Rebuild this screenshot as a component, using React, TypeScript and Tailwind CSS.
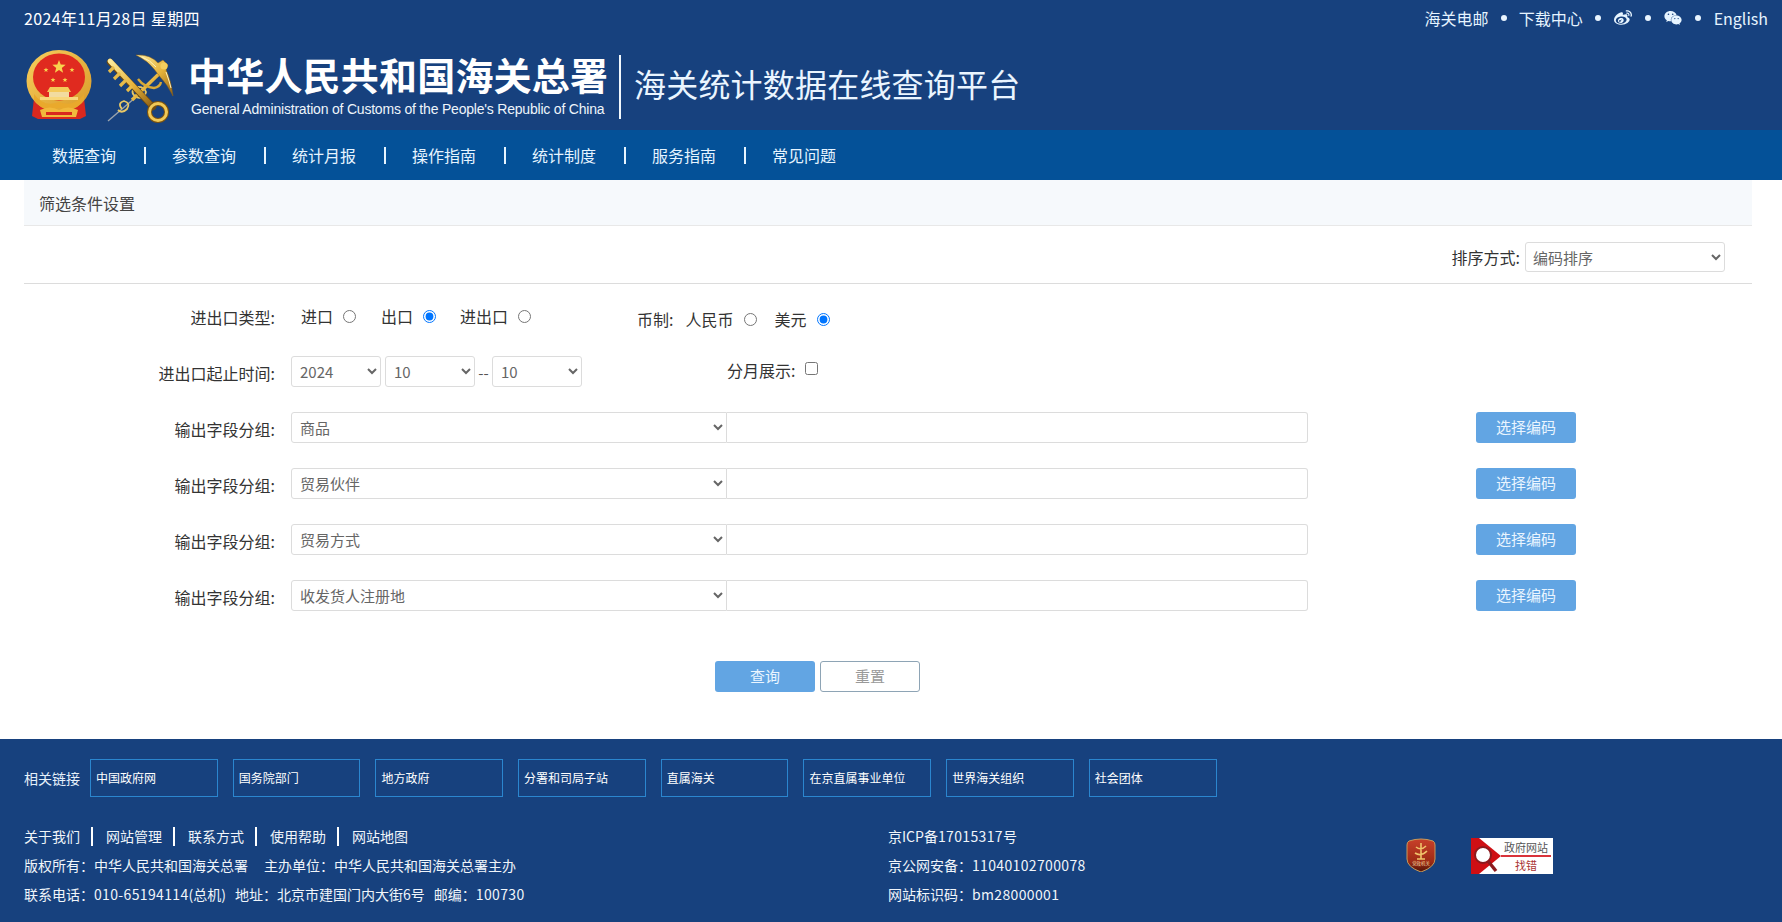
import { FaWeibo, FaWeixin } from "react-icons/fa";

const FC = "\uFF1A";

const Dot = ({ cls }: { cls: string }) => <span className={`w-[6px] h-[6px] rounded-full bg-[#eaf5ff] shrink-0 ${cls}`} />;

function Emblem() {
  const stars: [number, number, number][] = [
    [33, 17, 7],
    [20, 20, 2.6],
    [46, 20, 2.6],
    [27, 30, 2.6],
    [39, 30, 2.6],
  ];
  const star = (cx: number, cy: number, r: number) => {
    const p: string[] = [];
    for (let i = 0; i < 10; i++) {
      const a = (Math.PI / 5) * i - Math.PI / 2;
      const rr = i % 2 ? r * 0.42 : r;
      p.push(`${(cx + rr * Math.cos(a)).toFixed(2)},${(cy + rr * Math.sin(a)).toFixed(2)}`);
    }
    return p.join(" ");
  };
  return (
    <svg width="66" height="69" viewBox="0 0 66 69" className="shrink-0">
      <defs>
        <linearGradient id="eg" x1="0" y1="0" x2="1" y2="1">
          <stop offset="0" stopColor="#f7cf5e" />
          <stop offset="1" stopColor="#d99a28" />
        </linearGradient>
      </defs>
      <path d="M8 48 L6 66 L12 69 H54 L60 66 L58 48 Z" fill="#d9281e" />
      <ellipse cx="33" cy="31" rx="32.5" ry="31" fill="url(#eg)" />
      <ellipse cx="33" cy="27" rx="26" ry="23.5" fill="#e02a1f" />
      {stars.map(([x, y, r], i) => (
        <polygon key={i} points={star(x, y, r)} fill="#f8d34e" />
      ))}
      <path d="M21 42 L24 37 H42 L45 42 Z" fill="#f4c95a" />
      <rect x="23" y="42" width="20" height="5" fill="#f2dca0" />
      <rect x="14" y="47" width="38" height="3" fill="#f8d77a" />
      <path d="M8 44 Q18 58 33 52 Q48 58 58 44 L58 50 Q48 64 33 58 Q18 64 8 50 Z" fill="#e9a92c" />
      <path d="M14 60 Q24 55 33 60 Q42 55 52 60 L50 67 H16 Z" fill="#f1b93c" />
      <path d="M20 62 H46 V65 H20 Z" fill="#d9281e" />
    </svg>
  );
}

function CustomsKey() {
  return (
    <svg width="68" height="70" viewBox="0 0 68 70" className="shrink-0">
      <defs>
        <linearGradient id="kg" x1="0" y1="0" x2="1" y2="1">
          <stop offset="0" stopColor="#fdeb9c" />
          <stop offset="0.55" stopColor="#e5b23a" />
          <stop offset="1" stopColor="#8f6115" />
        </linearGradient>
      </defs>
      <path d="M2 67 L30 43" stroke="#9aa3ad" strokeWidth="1.4" fill="none" />
      <path d="M16 55 Q11 49 18 47 Q25 49 21 55 Q16 60 12 56 M30 43 Q23 38 30 33 Q38 32 40 38 Q38 46 30 43" stroke="#e8c765" strokeWidth="1.8" fill="none" />
      <path d="M26 46 L58 15" stroke="url(#kg)" strokeWidth="3.4" fill="none" />
      <path d="M32 25 Q38 33 48 34 Q54 33 55 28" stroke="#d8a936" strokeWidth="2.4" fill="none" />
      <path d="M4 8 L47 53" stroke="#6d4a10" strokeWidth="6.4" strokeLinecap="round" fill="none" />
      <path d="M4 7 L46 52" stroke="url(#kg)" strokeWidth="4.8" strokeLinecap="round" fill="none" />
      <path d="M8 13 L3 18 M14 19 L8 25 M20 26 L14 32 M26 32 L21 37" stroke="#e6bb4a" strokeWidth="3.2" fill="none" />
      <circle cx="52" cy="58" r="8.5" stroke="#7c5310" strokeWidth="5" fill="none" />
      <circle cx="52" cy="58" r="8.5" stroke="#f0c957" strokeWidth="3" fill="none" />
      <path d="M30 1 Q44 0 52 9 L57 6 L62 11 L60 16 Q65 26 67 42 Q61 30 55 24 L48 15 Q42 7 30 1 Z" fill="url(#kg)" stroke="#8f6115" strokeWidth="0.5" />
      <path d="M36 3 Q44 6 50 13 M60 18 Q63 26 65 34" stroke="#fff3c0" strokeWidth="1" fill="none" />
      <circle cx="58" cy="12" r="3.6" fill="#f3ce5e" />
    </svg>
  );
}

function Badge() {
  return (
    <svg width="30" height="34" viewBox="0 0 30 34" className="shrink-0">
      <defs>
        <linearGradient id="bg1" x1="0" y1="0" x2="0" y2="1">
          <stop offset="0" stopColor="#c8402a" />
          <stop offset="0.7" stopColor="#9c2a14" />
          <stop offset="1" stopColor="#4f1408" />
        </linearGradient>
      </defs>
      <path d="M3 3 Q15 -1 27 3 Q29 4 29 7 V21 Q29 29 15 34 Q1 29 1 21 V7 Q1 4 3 3 Z" fill="url(#bg1)" stroke="#c79a5a" strokeWidth="1" />
      <path d="M15 5 V21 M10 9 Q15 13 20 8 M9 15 Q15 19 21 13 M11 21 H19" stroke="#f0c36a" strokeWidth="1.6" fill="none" />
      <text x="15" y="27" fontSize="4.4" fill="#f4d9a0" textAnchor="middle">党政机关</text>
    </svg>
  );
}

function GovError() {
  return (
    <div className="flex w-[82px] h-[36px] bg-white shrink-0">
      <svg width="30" height="36" viewBox="0 0 30 36" className="shrink-0">
        <path d="M0 0 H8 L30 18 L8 36 H0 Z" fill="#cf0f14" />
        <circle cx="12" cy="17" r="8" fill="#fff" stroke="#8d1a1e" strokeWidth="2" />
        <path d="M17 23 L25 33" stroke="#8d1a1e" strokeWidth="3.4" />
      </svg>
      <div className="flex flex-col items-center w-[50px] pt-[2px]">
        <span className="text-[11px] leading-[15px] text-[#555] whitespace-nowrap">政府网站</span>
        <span className="w-full h-[2px] bg-[#d9333a]" />
        <span className="text-[11px] leading-[16px] text-[#a33] whitespace-nowrap">找错</span>
      </div>
    </div>
  );
}

function Radio({ label, checked, name, textClass }: { label: string; checked?: boolean; name: string; textClass: string }) {
  return (
    <label className={`flex items-center ${textClass}`}>
      <span>{label}</span>
      <input type="radio" name={name} defaultChecked={checked} className="m-0 ml-[10px] w-[13px] h-[13px]" />
    </label>
  );
}

function FieldRow({ value }: { value: string }) {
  return (
    <div className="flex h-[31px] mt-[25px]">
      <div className="w-[275px] text-right pt-[5px] text-[16px] leading-[24px] text-[#333]">输出字段分组:</div>
      <select
        defaultValue={value}
        className="ml-[16px] w-[436px] h-[31px] bg-white border border-[#dcdcdc] rounded-l-[3px] pl-[4px] text-[15px] text-[#666]"
      >
        <option>{value}</option>
      </select>
      <input type="text" className="w-[581px] h-[31px] bg-white border border-l-0 border-[#dcdcdc] rounded-r-[3px]" />
      <button className="ml-[168px] w-[100px] h-[31px] rounded-[3px] bg-[#62a5e3] text-[15px] text-[#eaf5ff]">选择编码</button>
    </div>
  );
}

function Sel({ v, cls }: { v: string; cls: string }) {
  return (
    <select defaultValue={v} className={`w-[90px] h-[31px] bg-white border border-[#dcdcdc] rounded-[3px] pl-[4px] text-[15px] text-[#666] ${cls}`}>
      <option>{v}</option>
    </select>
  );
}

export default function App() {
  const nav = ["数据查询", "参数查询", "统计月报", "操作指南", "统计制度", "服务指南", "常见问题"];
  const boxes = ["中国政府网", "国务院部门", "地方政府", "分署和司局子站", "直属海关", "在京直属事业单位", "世界海关组织", "社会团体"];
  const links = ["关于我们", "网站管理", "联系方式", "使用帮助", "网站地图"];
  return (
    <div className="w-[1782px] h-[922px] overflow-hidden bg-white font-['Noto_Sans_CJK_SC',sans-serif]">
      <header className="h-[130px] bg-[#17417e]">
        <div className="h-[36px] flex items-center justify-between pl-[24px] pr-[14px] text-[16px] text-white">
          <span className="tracking-[0.35px]">2024年11月28日 星期四</span>
          <div className="flex items-center text-[#e6f4ff]">
            <span>海关电邮</span>
            <Dot cls="ml-[12px]" />
            <span className="ml-[12px]">下载中心</span>
            <Dot cls="ml-[12px]" />
            <FaWeibo className="ml-[13px] w-[18px] h-[18px]" />
            <Dot cls="ml-[13px]" />
            <FaWeixin className="ml-[13px] w-[18px] h-[18px]" />
            <Dot cls="ml-[13px]" />
            <span className="ml-[13px]">English</span>
          </div>
        </div>
        <div className="flex items-start pl-[26px] pt-[14px]">
          <Emblem />
          <div className="ml-[14px] mt-[4px]">
            <CustomsKey />
          </div>
          <div className="ml-[14px] mt-[1px] w-[431px]">
            <div className="text-[38px] leading-[46px] font-bold tracking-[0.2px] text-white whitespace-nowrap">中华人民共和国海关总署</div>
            <div className="mt-[4px] ml-[3px] text-[14px] leading-[16px] tracking-[-0.2px] text-[#eef5fb] font-['Liberation_Sans',sans-serif] whitespace-nowrap">
              General Administration of Customs of the People's Republic of China
            </div>
          </div>
          <div className="w-[2px] h-[64px] mt-[5px] bg-[#f2f8fd]" />
          <div className="ml-[13px] mt-[13px] text-[32px] leading-[40px] tracking-[0.2px] text-[#eaf5ff] whitespace-nowrap">海关统计数据在线查询平台</div>
        </div>
      </header>

      <nav className="h-[50px] bg-[#045198] flex items-center pl-[52px] text-[16px] text-[#e6f4ff]">
        {nav.map((n, i) => (
          <div key={n} className="flex items-center">
            <span className="w-[64px] whitespace-nowrap">{n}</span>
            {i < nav.length - 1 && <span className="ml-[28px] mr-[26px] w-[2px] h-[17px] bg-[#e6f4ff]" />}
          </div>
        ))}
      </nav>

      <main className="mx-[24px] w-[1728px] h-[559px]">
        <div className="h-[46px] bg-[#f6f9fc] border-b border-[#e8e8e8] flex items-center pl-[15px] text-[16px] text-[#444]">筛选条件设置</div>
        <div className="h-[58px] border-b border-[#dcdcdc] flex justify-end pr-[27px] pt-[16px]">
          <span className="text-[16px] leading-[30px] text-[#333] mr-[5px]">排序方式:</span>
          <select defaultValue="编码排序" className="w-[200px] h-[30px] bg-white border border-[#dcdcdc] rounded-[3px] pl-[3px] text-[15px] text-[#666]">
            <option>编码排序</option>
          </select>
        </div>

        <div className="pt-[22px]">
          <div className="flex h-[25px] text-[16px] leading-[22px] text-[#333]">
            <div className="w-[251px] text-right">进出口类型:</div>
            <div className="flex h-[20px]">
              <Radio name="t" label="进口" textClass="ml-[26px]" />
              <Radio name="t" label="出口" checked textClass="ml-[25px]" />
              <Radio name="t" label="进出口" textClass="ml-[24px]" />
            </div>
            <div className="flex h-[26px] items-center">
              <span className="ml-[106px]">币制:</span>
              <Radio name="c" label="人民币" textClass="ml-[12px]" />
              <Radio name="c" label="美元" checked textClass="ml-[18px]" />
            </div>
          </div>

          <div className="flex h-[31px] mt-[25px]">
            <div className="w-[251px] text-right pt-[5px] text-[16px] leading-[24px] text-[#333]">进出口起止时间:</div>
            <Sel v="2024" cls="ml-[16px]" />
            <Sel v="10" cls="ml-[4px]" />
            <span className="w-[17px] text-center text-[15px] leading-[34px] text-[#555]">--</span>
            <Sel v="10" cls="" />
            <span className="ml-[145px] text-[16px] leading-[28px] text-[#333]">分月展示:</span>
            <input type="checkbox" className="ml-[10px] mt-[6px] w-[13px] h-[13px]" />
          </div>
        </div>

        <div className="-ml-[24px]">
          <FieldRow value="商品" />
          <FieldRow value="贸易伙伴" />
          <FieldRow value="贸易方式" />
          <FieldRow value="收发货人注册地" />
        </div>

        <div className="flex mt-[50px] ml-[691px] gap-[5px]">
          <button className="w-[100px] h-[31px] rounded-[3px] bg-[#62a5e3] text-[15px] text-[#eaf5ff]">查询</button>
          <button className="w-[100px] h-[31px] rounded-[3px] bg-white border border-[#8ea4b5] text-[15px] text-[#999]">重置</button>
        </div>
      </main>

      <footer className="h-[183px] bg-[#17417e] pt-[20px] text-white">
        <div className="flex items-center h-[38px] pl-[24px]">
          <span className="text-[14px] w-[66px] text-[#e6f0fa]">相关链接</span>
          <div className="flex gap-[15px]">
            {boxes.map((b) => (
              <div key={b} className="w-[127.7px] h-[38px] border border-[#2b86cf] flex items-center pl-[5px] text-[12px] whitespace-nowrap">
                {b}
              </div>
            ))}
          </div>
        </div>
        <div className="flex mt-[25px] text-[14px] leading-[29px] text-[#f0f5fa]">
          <div className="w-[888px] pl-[24px]">
            <div className="flex items-center h-[29px]">
              {links.map((l, i) => (
                <div key={l} className="flex items-center">
                  <span>{l}</span>
                  {i < links.length - 1 && <span className="ml-[11px] mr-[13px] w-[2px] h-[19px] bg-white" />}
                </div>
              ))}
            </div>
            <div className="flex">
              <span>版权所有{FC}中华人民共和国海关总署</span>
              <span className="ml-[16px]">主办单位{FC}中华人民共和国海关总署主办</span>
            </div>
            <div className="flex">
              <span>联系电话{FC}<span className="tracking-[0.35px]">010-65194114</span>(总机)</span>
              <span className="ml-[9px]">地址{FC}北京市建国门内大街6号</span>
              <span className="ml-[9px]">邮编{FC}<span className="tracking-[0.35px]">100730</span></span>
            </div>
          </div>
          <div className="w-[518px]">
            <div>京ICP备<span className="tracking-[0.35px]">17015317</span>号</div>
            <div>京公网安备{FC}<span className="tracking-[0.35px]">11040102700078</span></div>
            <div>网站标识码{FC}<span className="tracking-[0.35px]">bm28000001</span></div>
          </div>
          <div className="flex items-start gap-[35px] pt-[16px]">
            <Badge />
            <GovError />
          </div>
        </div>
      </footer>
    </div>
  );
}
